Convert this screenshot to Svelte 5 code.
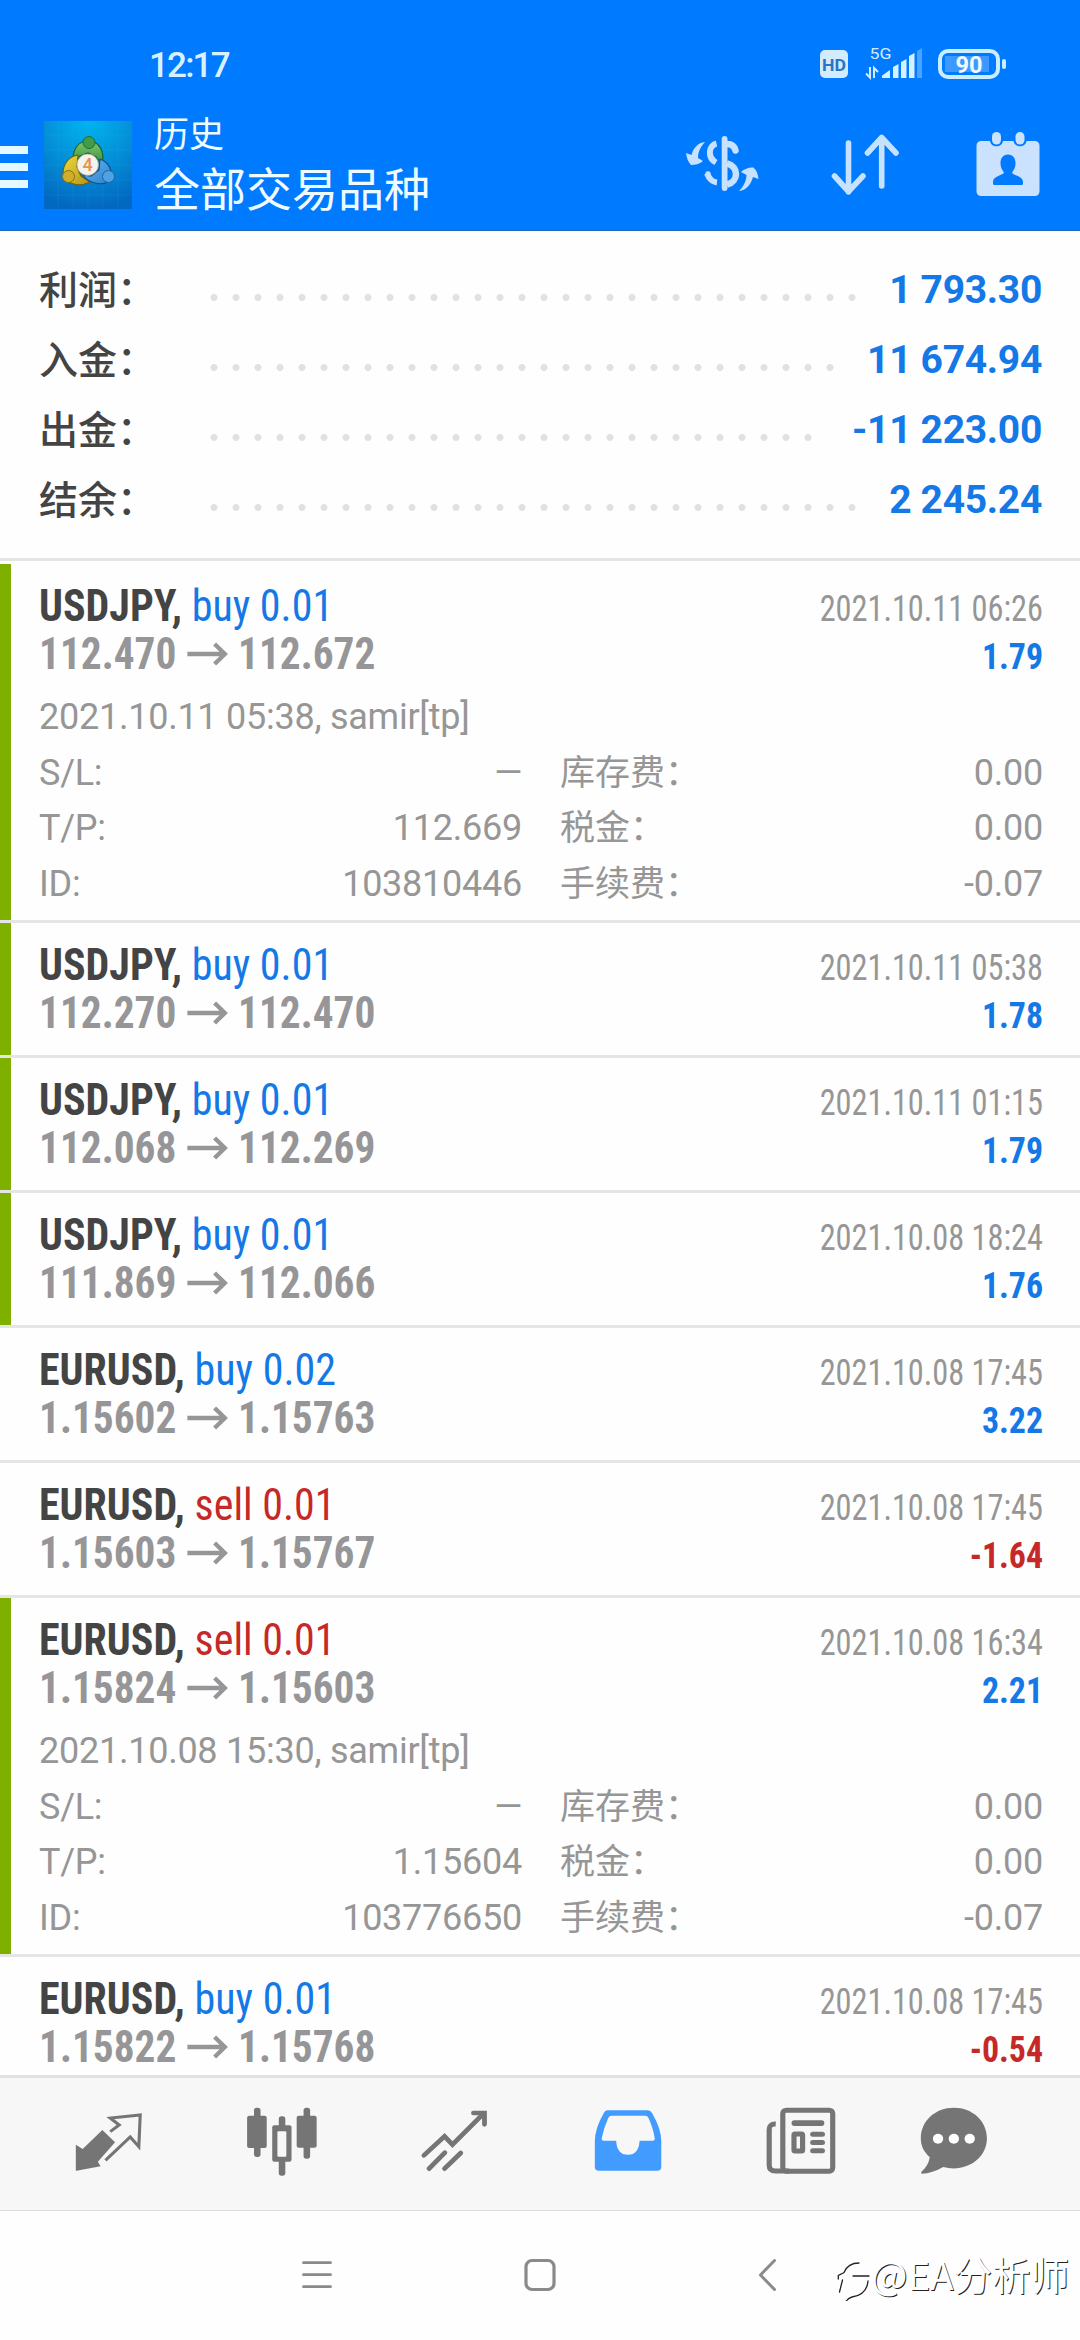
<script>
  const summary = [
    { label: '利润：', value: '1 793.30', dots: 30 },
    { label: '入金：', value: '11 674.94', dots: 29 },
    { label: '出金：', value: '-11 223.00', dots: 28 },
    { label: '结余：', value: '2 245.24', dots: 30 }
  ];

  const deals = [
    {
      symbol: 'USDJPY', side: 'buy', lots: '0.01', open: '112.470', close: '112.672',
      time: '2021.10.11 06:26', profit: '1.79', tp: true,
      detail: { note: '2021.10.11 05:38, samir[tp]', sl: '—', tp: '112.669', id: '103810446' }
    },
    { symbol: 'USDJPY', side: 'buy', lots: '0.01', open: '112.270', close: '112.470', time: '2021.10.11 05:38', profit: '1.78', tp: true },
    { symbol: 'USDJPY', side: 'buy', lots: '0.01', open: '112.068', close: '112.269', time: '2021.10.11 01:15', profit: '1.79', tp: true },
    { symbol: 'USDJPY', side: 'buy', lots: '0.01', open: '111.869', close: '112.066', time: '2021.10.08 18:24', profit: '1.76', tp: true },
    { symbol: 'EURUSD', side: 'buy', lots: '0.02', open: '1.15602', close: '1.15763', time: '2021.10.08 17:45', profit: '3.22' },
    { symbol: 'EURUSD', side: 'sell', lots: '0.01', open: '1.15603', close: '1.15767', time: '2021.10.08 17:45', profit: '-1.64' },
    {
      symbol: 'EURUSD', side: 'sell', lots: '0.01', open: '1.15824', close: '1.15603',
      time: '2021.10.08 16:34', profit: '2.21', tp: true,
      detail: { note: '2021.10.08 15:30, samir[tp]', sl: '—', tp: '1.15604', id: '103776650' }
    },
    { symbol: 'EURUSD', side: 'buy', lots: '0.01', open: '1.15822', close: '1.15768', time: '2021.10.08 17:45', profit: '-0.54' }
  ];
</script>

<div class="screen" lang="zh-CN">
  <header>
    <div class="status">
      <span class="clock">12:17</span>
      <svg class="indicators" width="190" height="36" viewBox="820 46 190 36">
        <rect x="820" y="50" width="28" height="28" rx="5" fill="#d3ebff" />
        <text x="834" y="70.5" text-anchor="middle" textLength="24" lengthAdjust="spacingAndGlyphs" font-size="17" font-weight="700" fill="#2b74c4">HD</text>
        <text x="869.5" y="59" textLength="22" lengthAdjust="spacingAndGlyphs" font-size="15.5" fill="#d3ebff">5G</text>
        <g fill="none" stroke="#d3ebff" stroke-width="2">
          <path d="M870 67v10.500l-4-4M874 78V68l4 4" />
        </g>
        <g fill="#d3f1ff">
          <path d="M882 78v-2.500l8-5.500v8zM893 78V67l5.500-3v14zM901 78V62l5.500-3v19zM909 78V56l5.500-3v25z" />
          <path opacity=".35" d="M917 78V51l5-3v30z" />
        </g>
        <rect x="945" y="56" width="44" height="16" fill="#3d99ff" />
        <rect x="940" y="51" width="58" height="26" rx="8" fill="none" stroke="#c9efff" stroke-width="4" />
        <rect x="1002" y="59" width="4" height="10" rx="2" fill="#c9efff" />
        <text x="969" y="73" text-anchor="middle" textLength="27" lengthAdjust="spacingAndGlyphs" font-size="23" font-weight="700" fill="#eefaff">90</text>
      </svg>
    </div>

    <div class="appbar">
      <div class="burger"><i></i><i></i><i></i></div>
      <svg class="logo" width="88" height="88" viewBox="0 0 88 88">
        <defs>
          <radialGradient id="sky" cx=".5" cy="0" r="1">
            <stop offset="0" stop-color="#00b4ee" />
            <stop offset=".5" stop-color="#0490d8" />
            <stop offset="1" stop-color="#0268c0" />
          </radialGradient>
          <linearGradient id="green" x2="0" y2="1"><stop offset="0" stop-color="#84c46c" /><stop offset="1" stop-color="#2f9340" /></linearGradient>
          <linearGradient id="gold" x2="1" y2="1"><stop offset="0" stop-color="#f0dc3c" /><stop offset="1" stop-color="#b09418" /></linearGradient>
          <linearGradient id="azure" x2="1" y2="1"><stop offset="0" stop-color="#6ab8ee" /><stop offset="1" stop-color="#2a80cc" /></linearGradient>
        </defs>
        <rect width="88" height="88" fill="url(#sky)" />
        <path d="M14 0v88M29 0v88M44 0v88M59 0v88M74 0v88M0 14h88M0 29h88M0 44h88M0 59h88M0 74h88" stroke="#4cc4ff" stroke-opacity=".1" />
        <g stroke-width="1.200">
          <path d="M30 43c-3-14 4-23 14-23 12 0 17 11 14 24l-6-8-8-4-8 3z" fill="url(#green)" stroke="#1c6230" />
          <path d="M34 34c-12 2-17 14-14 22 4 8 16 10 26 5l-9-6-4-9z" fill="url(#gold)" stroke="#71601a" />
          <path d="M56 38c11 4 14 16 9 22-6 5-20 3-26-6l8 1 8-6z" fill="url(#azure)" stroke="#124f8c" />
        </g>
        <circle cx="45" cy="21.500" r="6" fill="#3f9c48" stroke="#226c34" />
        <circle cx="24.500" cy="55.500" r="6" fill="#cfae28" stroke="#8a7018" />
        <circle cx="64.500" cy="55.500" r="6" fill="#4da2e2" stroke="#1d66a8" />
        <circle cx="43.700" cy="43.700" r="10.700" fill="#f4f3ef" stroke="#b9a98c" stroke-width=".8" />
        <text x="43.700" y="50" text-anchor="middle" font-size="18" font-weight="500" fill="#e8924a">4</text>
      </svg>
      <div class="titles">
        <span class="sub">历史</span>
        <span class="main">全部交易品种</span>
      </div>
      <svg class="actions" width="360" height="70" viewBox="683 128 360 70" fill="none" stroke="#c7e2ff">
        <!-- currency switch -->
        <rect x="721.700" y="136" width="5.800" height="55" rx="2.900" fill="#c7e2ff" stroke="none" />
        <path d="M716.500 143.500c-8 2-9.500 14-.5 19M707 173.500c2 5 5 8.500 10 9" stroke-width="6" />
        <circle cx="708" cy="174" r="2.700" fill="#c7e2ff" stroke="none" />
        <path d="M727 144c4 0 7.500 2 8.500 6.500" stroke-width="6.500" stroke-linecap="round" />
        <path d="M727 163.500c12 3 12 18 0 21" stroke-width="6.500" />
        <path d="M705 142c-8 1-12 7-13.500 13l-5.500-2c.5 5 2.500 9.500 5 12 4 0 8.500-1 12-4l-5-3c0-5 2-11 7-16z" fill="#c7e2ff" stroke="none" />
        <path d="M739 191c8-1 12-7 14-14l5.500 2c-.5-5-2-9-5-11.500-4-.5-9 1-12.500 4.500l5.500 3c0 5-3 12-7.500 16z" fill="#c7e2ff" stroke="none" />
        <!-- sort -->
        <path d="M848.500 143v49M834.500 176l14 15.500 14.500-15.500M881.700 186V137.500M867.500 153l14.200-15.500L896 153" stroke-width="5.600" stroke-linecap="round" stroke-linejoin="round" />
        <!-- calendar -->
        <path d="M981 141h9c1 7 12 7 13 0h10.500c1 7 12 7 13 0h8.500a4.500 4.500 0 0 1 4.500 4.500v46a4.500 4.500 0 0 1-4.500 4.500h-54a4.500 4.500 0 0 1-4.500-4.500v-46a4.500 4.500 0 0 1 4.500-4.500z" fill="#cbe2ff" stroke="none" />
        <rect x="992" y="132" width="9" height="12.500" rx="4.500" fill="#cbe2ff" stroke="none" />
        <rect x="1015.500" y="132" width="9" height="12.500" rx="4.500" fill="#cbe2ff" stroke="none" />
        <path d="M1008 154.500c5 0 7.500 3.500 7.500 9 0 4-1.500 6.500-3.500 9 .5 3 11 3 11 9.500v1.500q0 1.500-1.500 1.500h-27q-1.500 0-1.500-1.500v-1.500c0-6.500 10.500-6.500 11-9.500-2-2.500-3.500-5-3.500-9 0-5.500 2.500-9 7.500-9z" fill="#007aff" stroke="none" />
      </svg>
    </div>
  </header>

  <section class="summary">
    {#each summary as row}
      <div class="sum-row">
        <span class="sum-label">{row.label}</span>
        <span class="dots" style:width="{row.dots * 22}px"></span>
        <span class="sum-value">{row.value}</span>
      </div>
    {/each}
  </section>

  <main>
    {#each deals as d}
      <article class:tp={d.tp} class:open={d.detail}>
        <div class="line">
          <span class="sym">{d.symbol}, <span class="side {d.side}">{d.side} {d.lots}</span></span>
          <span class="date">{d.time}</span>
        </div>
        <div class="line">
          <span class="price">
            {d.open}<svg width="43" height="24" viewBox="0 0 41 24" preserveAspectRatio="none" fill="none" stroke="#969698" stroke-width="4.300"><path d="M0 12h38M27.500 2l10.300 10-10.300 10" /></svg>{d.close}
          </span>
          <span class="profit" class:loss={d.profit.startsWith('-')}>{d.profit}</span>
        </div>
        {#if d.detail}
          <div class="detail">
            <p>{d.detail.note}</p>
            <div class="grid">
              <span>S/L:</span><b>{d.detail.sl}</b><span class="zh">库存费：</span><b>0.00</b>
              <span>T/P:</span><b>{d.detail.tp}</b><span class="zh">税金：</span><b>0.00</b>
              <span>ID:</span><b>{d.detail.id}</b><span class="zh">手续费：</span><b>-0.07</b>
            </div>
          </div>
        {/if}
      </article>
    {/each}
  </main>

  <nav class="tabs">
    <svg viewBox="206 130 220 220" preserveAspectRatio="none">
      <path d="M220 255l20 13 57-57 37 37-50 58 8 14-70 13q-3 0-2-3z" fill="#757575" />
      <path d="M320 216l26-20-26-21 87-9-4 95-25-29-72 70" fill="none" stroke="#757575" stroke-width="9" stroke-linejoin="miter" />
    </svg>
    <svg viewBox="706 130 220 220" preserveAspectRatio="none">
      <g fill="#757575">
        <rect x="735" y="144" width="19" height="148" rx="8" /><rect x="715" y="168" width="57" height="97" rx="6" />
        <rect x="879" y="144" width="19" height="153" rx="8" /><rect x="859" y="168" width="58" height="96" rx="6" />
        <rect x="807" y="170" width="19" height="178" rx="8" /><rect x="788" y="197" width="56" height="109" rx="6" />
      </g>
      <rect x="803" y="215" width="26" height="76" rx="3" fill="#f7f7f7" />
    </svg>
    <svg viewBox="1210 130 220 220" preserveAspectRatio="none" fill="none" stroke="#757575" stroke-linecap="round">
      <path d="M1230 287l60-57 23 25 90-93" stroke-width="14" />
      <path d="M1374 160h32v34" stroke-width="14" />
      <path d="M1245 327l46-48M1290 327l47-47" stroke-width="14" />
    </svg>
    <svg viewBox="144 130 220 220" preserveAspectRatio="none">
      <path d="M194 152h118q8 0 12 8 27 47 27 85v76q0 12-12 12H170q-12 0-12-12v-76q0-38 26-85 4-8 10-8z" fill="#429cff" />
      <path d="M207 168h97q7 0 10 7 14 32 18 61 1 7-6 7h-38q-2 42-34 42t-34-42h-36q-7 0-6-7 5-29 19-61 3-7 10-7z" fill="#f7f7f7" />
    </svg>
    <svg viewBox="648 130 220 220" preserveAspectRatio="none">
      <rect x="705.500" y="151.500" width="145" height="183" rx="10" fill="none" stroke="#757575" stroke-width="15" />
      <path d="M685 193q-19-1-19 17v106q0 18 18 18h40" fill="none" stroke="#757575" stroke-width="15" />
      <rect x="731" y="182" width="95" height="17" rx="8" fill="#757575" />
      <rect x="738" y="223" width="25" height="51" rx="3" fill="none" stroke="#757575" stroke-width="15" />
      <g fill="#757575"><rect x="785" y="216" width="43" height="15" rx="7.500" /><rect x="785" y="241" width="43" height="15" rx="7.500" /><rect x="785" y="266" width="43" height="15" rx="7.500" /></g>
    </svg>
    <svg viewBox="1089 130 220 220" preserveAspectRatio="none">
      <path d="M1199 144c54 0 96 40 96 92 0 62-62 104-127 86-20 12-42 20-62 20q-4-1-1-6c12-10 21-24 24-43-17-16-26-34-26-57 0-52 42-92 96-92z" fill="#757575" />
      <g fill="#fff"><circle cx="1153" cy="237" r="15" /><circle cx="1199" cy="237" r="15" /><circle cx="1245" cy="237" r="15" /></g>
    </svg>
  </nav>

  <footer>
    <svg class="sysnav" width="480" height="36" viewBox="300 2257 480 36" fill="none" stroke="#8a8a8a" stroke-width="3.200" stroke-linecap="round" stroke-linejoin="round">
      <path d="M303.500 2262.700h27M303.500 2274.700h27M303.500 2286.700h27" stroke-width="2.800" />
      <rect x="526" y="2260.500" width="28" height="29" rx="6" />
      <path d="M774.500 2260.500l-14 14.500 14 14.500" stroke-width="3" />
    </svg>
    <div class="mark">
      <svg width="34" height="46" viewBox="836 2256 34 46" fill="none" stroke="#222" stroke-width="1.300" stroke-linecap="round">
        <path d="M858 2264q-11 0-15 9.500M837.300 2280v-3.500l5-2.500M841.500 2281l-3 12M852 2277h16M867 2282c-1 12-9 15-16 16q-4 1-6.500 5" />
      </svg>
      <span>@EA分析师</span>
    </div>
  </footer>
</div>

<style>
  :global(body) { background: #fff; }
  .screen {
    width: 1080px;
    height: 2340px;
    display: flex;
    flex-direction: column;
    overflow: hidden;
    background: #fefefe;
    font-family: Roboto, "Noto Sans CJK SC", sans-serif;
    color: #969696;
  }
  header {
    flex: none;
    box-sizing: border-box;
    height: 231px;
    background: #007aff;
    border-bottom: 1px solid #1b69bd;
  }
  .status {
    display: flex;
    justify-content: space-between;
    align-items: center;
    box-sizing: border-box;
    height: 120px;
    padding: 8px 70px 0 149px;
  }
  .clock {
    color: #d8f1ff;
    font-size: 35px;
    font-weight: 500;
    line-height: 40px;
    letter-spacing: -1.800px;
    padding-top: 3px;
  }
  .appbar { display: flex; height: 110px; }
  .burger {
    width: 27.500px;
    padding-top: 26px;
    display: flex;
    flex-direction: column;
    gap: 9px;
  }
  .burger i { height: 8px; background: #e6f8ff; }
  .logo { flex: none; margin: 1px 22px 0 16.500px; }
  .titles {
    flex: 1;
    display: flex;
    flex-direction: column;
    color: #eefcff;
    font-family: "Noto Sans CJK SC", sans-serif;
    white-space: nowrap;
  }
  .sub { font-size: 35px; line-height: 40px; margin-top: -8px; }
  .main { font-size: 46px; line-height: 56px; margin-top: 6px; }
  .actions { flex: none; margin: 8px 37px 0 0; }

  .summary {
    flex: none;
    box-sizing: border-box;
    height: 330px;
    padding: 24px 38px 0 39px;
    border-bottom: 3px solid #e5e5e5;
    margin-bottom: 3px;
  }
  .sum-row { display: flex; height: 70px; line-height: 70px; font-size: 39px; }
  .sum-label {
    width: 163.500px;
    height: 64px;
    line-height: 64px;
    color: #444;
    font-family: "Noto Sans CJK SC", sans-serif;
    font-weight: 500;
  }
  .dots {
    height: 70px;
    background: radial-gradient(circle at 11px 42.500px, #e1e1e1 3px, transparent 4px) 0 0 / 22px 70px;
  }
  .sum-value {
    margin-left: auto;
    line-height: 71px;
    font-weight: 700;
    letter-spacing: -0.300px;
    color: #1478e6;
    white-space: pre;
  }

  main { flex: 1; min-height: 0; overflow: hidden; }
  article {
    box-sizing: border-box;
    height: 135px;
    padding: 19px 37px 0 39px;
    box-shadow: inset 0 -3px #e5e5e5;
  }
  article.tp { background: linear-gradient(#7eb000, #7eb000) 0 0 / 11px 100% no-repeat; }
  article.open { height: 359px; }
  .line {
    display: flex;
    justify-content: space-between;
    align-items: baseline;
    height: 48px;
    line-height: 48px;
    white-space: nowrap;
    font-family: "Roboto Condensed", Roboto, sans-serif;
    font-stretch: 75%;
  }
  .sym { font-size: 43.500px; font-weight: 700; color: #444; transform: scaleX(.965); transform-origin: left; }
  .side { font-weight: 400; }
  .buy { color: #1478e6; }
  .sell { color: #c62828; }
  .price { font-size: 43.500px; font-weight: 700; color: #969698; transform: scaleX(.95); transform-origin: left; }
  .price svg { margin: 0 11px 3px; }
  .date { font-size: 36px; transform: scaleX(.897); transform-origin: right; }
  .profit { font-size: 36px; font-weight: 700; color: #1478e6; transform: scaleX(.94); transform-origin: right; }
  .profit.loss { color: #c62828; }

  .detail { padding-top: 11px; font-size: 36px; line-height: 55.600px; letter-spacing: -0.250px; }
  .detail p { margin: 0; }
  .grid { display: grid; grid-template-columns: 120px 363px 200px 1fr; }
  .grid b { font-weight: inherit; text-align: right; }
  .zh { padding-left: 38px; font-size: 35px; letter-spacing: 0; white-space: nowrap; }

  .tabs {
    flex: none;
    box-sizing: border-box;
    height: 136px;
    display: grid;
    grid-template-columns: repeat(5, 173.200px) 132px;
    justify-items: center;
    padding: 25px 0 0 22px;
    background: #f7f7f7;
    border-top: 3px solid #e2e2e2;
    border-bottom: 1px solid #ddd;
  }
  .tabs svg { width: 75.760px; height: 73.330px; }

  footer {
    flex: none;
    display: flex;
    height: 129px;
    padding-left: 300px;
  }
  .sysnav { flex: none; margin-top: 46px; }
  .mark {
    display: flex;
    margin: 44px 0 0 57px;
    color: #fff;
    font-family: "Noto Sans CJK SC", sans-serif;
    font-size: 38.500px;
    line-height: 37px;
    text-shadow: 1px 1px 0.500px #222;
    white-space: nowrap;
  }
  .mark svg { flex: none; }
</style>
